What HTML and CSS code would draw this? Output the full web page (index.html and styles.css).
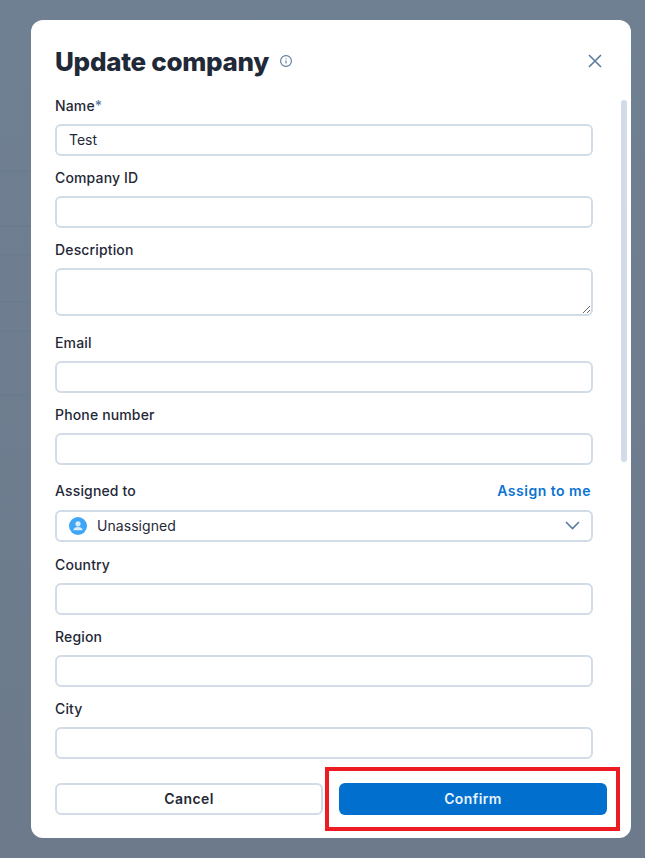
FILE: index.html
```html
<!DOCTYPE html>
<html lang="en">
<head>
  <meta charset="UTF-8">
  <title>Update company</title>
  <link rel="stylesheet" href="styles.css">
</head>
<body>
  <div class="modal">
    <div class="modal-head">
      <h1>Update company</h1>
      <svg class="info-icon" width="14" height="14" viewBox="0 0 14 14" fill="none" stroke="#5b7a9d" stroke-width="1.1">
        <circle cx="7" cy="7" r="5.4"/>
        <path d="M7 6.4v3.2"/>
        <path d="M7 4.2v1"/>
      </svg>
      <svg class="close-icon" width="16" height="16" viewBox="0 0 16 16" fill="none" stroke="#5b7a9d" stroke-width="1.6">
        <path d="M2 2l12 12M14 2L2 14"/>
      </svg>
    </div>

    <div class="modal-body">
      <form class="fields">
        <div class="field">
          <label>Name<span class="req">*</span></label>
          <input type="text" value="Test">
        </div>
        <div class="field">
          <label>Company ID</label>
          <input type="text">
        </div>
        <div class="field field-text">
          <label>Description</label>
          <textarea></textarea>
        </div>
        <div class="field">
          <label>Email</label>
          <input type="text">
        </div>
        <div class="field">
          <label>Phone number</label>
          <input type="text">
        </div>
        <div class="field field-assign">
          <div class="label-row">
            <label>Assigned to</label>
            <a class="assign-link">Assign to me</a>
          </div>
          <div class="select">
            <span class="avatar">
              <svg width="18" height="18" viewBox="0 0 18 18" fill="#fff" fill-opacity="0.8">
                <circle cx="9" cy="6.8" r="2.6"/>
                <path d="M4.4 13.2c0-2.2 2-3.3 4.6-3.3s4.6 1.1 4.6 3.3z"/>
              </svg>
            </span>
            <span class="select-value">Unassigned</span>
            <svg class="chevron" width="15" height="9" viewBox="0 0 15 9" fill="none" stroke="#5b7a9d" stroke-width="1.6">
              <path d="M1 1l6.500 6.500L14 1"/>
            </svg>
          </div>
        </div>
        <div class="field">
          <label>Country</label>
          <input type="text">
        </div>
        <div class="field">
          <label>Region</label>
          <input type="text">
        </div>
        <div class="field">
          <label>City</label>
          <input type="text">
        </div>
      </form>
      <div class="scroll-thumb"></div>
    </div>

    <div class="modal-foot">
      <button class="btn btn-cancel" type="button">Cancel</button>
      <button class="btn btn-confirm" type="button">Confirm</button>
    </div>

    <div class="highlight"></div>
  </div>
</body>
</html>
```

FILE: styles.css
```css
* {
  box-sizing: border-box;
}
html, body {
  height: 100%;
}
body {
  margin: 0;
  overflow: hidden;
  font-family: Inter, sans-serif;
  color: #1f2937;
  padding: 20px 14px 20px 31px;
  background-color: #6f7f91;
  /* the blurred table behind the dialog */
  background-image:
    linear-gradient(#6c7c90, #6c7c90),
    linear-gradient(#6c7c90, #6c7c90),
    linear-gradient(#6c7c90, #6c7c90),
    linear-gradient(#6c7c90, #6c7c90),
    linear-gradient(#6c7c90, #6c7c90),
    linear-gradient(#6c7c90, #6c7c90),
    linear-gradient(#6f8092, #6c7a8b);
  background-repeat: no-repeat;
  background-size: 31px 2px, 31px 2px, 31px 2px, 31px 2px, 31px 2px, 31px 2px, 100% 100%;
  background-position: 0 170px, 0 225px, 0 254px, 0 301px, 0 330px, 0 394px, 0 0;
}
.modal {
  position: relative;
  width: 600px;
  height: 818px;
  background: #fff;
  border-radius: 12px;
}
.modal-head {
  display: flex;
  align-items: center;
  height: 76px;
  padding: 6px 28px 0 24px;
}
h1 {
  margin: 0;
  font-family: Inter, sans-serif;
  font-size: 26px;
  font-weight: 800;
  letter-spacing: -0.3px;
  color: #1f2937;
}
.info-icon {
  margin-left: 10px;
}
.close-icon {
  margin-left: auto;
}
.modal-body {
  display: flex;
  align-items: flex-start;
  padding-left: 24px;
}
.fields {
  width: 538px;
  display: flex;
  flex-direction: column;
  gap: 12px;
}
.field label,
.assign-link {
  font-size: 14px;
  line-height: 20px;
}
.field label {
  display: block;
  margin-bottom: 8px;
  font-weight: 500;
  letter-spacing: 0.15px;
  color: #1f2937;
}
.req {
  color: #5b7a9d;
}
.field input,
.field textarea,
.select {
  display: block;
  width: 100%;
  height: 32px;
  padding: 0 12px 1px;
  border: 2px solid #d1dce8;
  border-radius: 6px;
  background: #fff;
  font-family: Inter, sans-serif;
  font-size: 14px;
  color: #1f2937;
  outline: none;
}
.field textarea {
  height: 48px;
}
.field-text {
  margin-bottom: 5px;
}
.field-assign {
  margin-top: 4px;
  margin-bottom: 1px;
}
.label-row {
  display: flex;
  justify-content: space-between;
  padding-right: 2px;
}
.label-row label {
  margin-bottom: 9px;
}
.assign-link {
  font-weight: 600;
  color: #0b74d1;
  letter-spacing: 0.5px;
}
.select {
  display: flex;
  align-items: center;
}
.avatar {
  display: flex;
  width: 18px;
  height: 18px;
  border-radius: 50%;
  background: #3ea6f5;
}
.select-value {
  margin-left: 10px;
  letter-spacing: 0.05px;
}
.chevron {
  margin-left: auto;
  margin-right: -1px;
}
.scroll-thumb {
  width: 6px;
  height: 362px;
  margin: 4px 0 0 28px;
  border-radius: 3px;
  background: #d1dce8;
}
.modal-foot {
  display: flex;
  gap: 16px;
  padding: 24px 24px 0;
}
.btn {
  width: 268px;
  height: 32px;
  padding: 0 0 2px;
  border-radius: 6px;
  font-family: Inter, sans-serif;
  font-size: 14px;
  font-weight: 600;
  letter-spacing: 0.4px;
}
.btn-cancel {
  border: 2px solid #d1dce8;
  background: #fff;
  color: #1f2937;
}
.btn-confirm {
  border: 0;
  background: #006fce;
  color: #e8f2fb;
}
/* red annotation drawn over the screenshot */
.highlight {
  position: absolute;
  left: 294px;
  top: 747px;
  width: 295px;
  height: 64px;
  border: 4px solid #ed1c24;
  pointer-events: none;
}
```
